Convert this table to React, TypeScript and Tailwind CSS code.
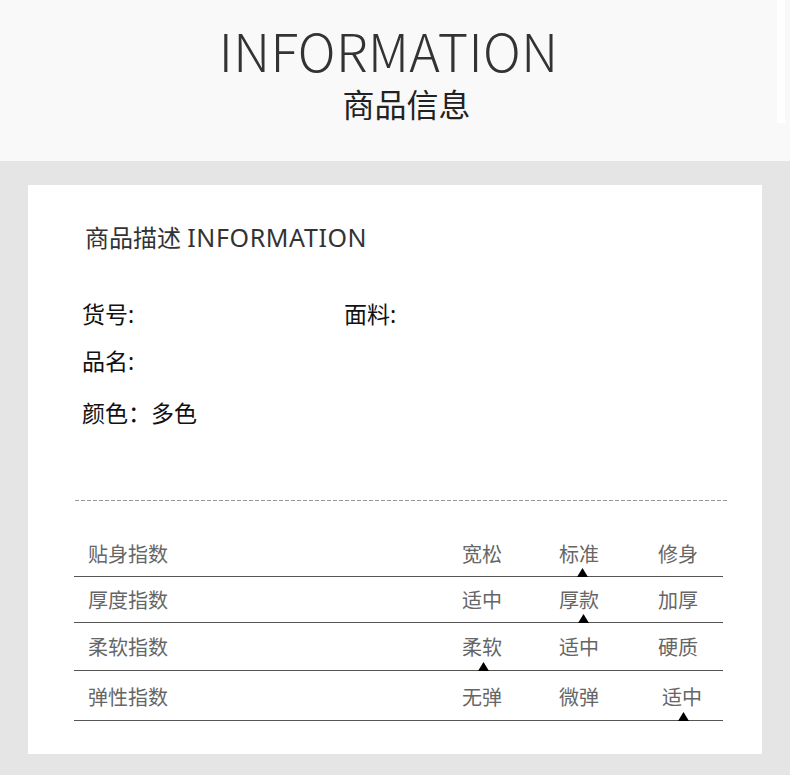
import React from 'react';

const rows = [
  { label: '贴身指数', values: ['宽松', '标准', '修身'], h: 'h-[47px] pb-[11px]', mark: 'left-[503px]', shift: '' },
  { label: '厚度指数', values: ['适中', '厚款', '加厚'], h: 'h-[46px] pb-[11px]', mark: 'left-[504px]', shift: '' },
  { label: '柔软指数', values: ['柔软', '适中', '硬质'], h: 'h-[48px] pb-[12px]', mark: 'left-[404px]', shift: '' },
  { label: '弹性指数', values: ['无弹', '微弹', '适中'], h: 'h-[50px] pb-[12px]', mark: 'left-[604px]', shift: 'pl-[4px]' },
];

function Marker({ className }: { className: string }) {
  return (
    <svg className={`absolute bottom-[-1px] ${className}`} width="11" height="9" viewBox="0 0 11 9">
      <polygon points="5.5,0 11,9 0,9" fill="#000" />
    </svg>
  );
}

export default function App() {
  const cjk = 'font-["Noto_Sans","Noto_Sans_CJK_SC",sans-serif]';
  return (
    <main className={`w-[790px] h-[775px] bg-[#e5e5e5] overflow-hidden ${cjk}`}>
      {/* Header band */}
      <header className="h-[161px] bg-[#f9f9f9] flex items-start pr-[5px]">
        <div className="flex-1 flex flex-col items-center">
          <h1 className='mt-[28px] font-["Noto_Sans_CJK_SC",sans-serif] font-light text-[52px] leading-[44px] tracking-[0.4px] text-[#333]'>
            INFORMATION
          </h1>
          <p className='mt-[15px] pl-[36px] font-["Noto_Sans_CJK_SC",sans-serif] text-[32px] leading-[32px] text-[#222]'>
            商品信息
          </p>
        </div>
        <div className="w-[8px] h-[123px] bg-white" />
      </header>

      {/* Card */}
      <section className="mx-[28px] mt-[24px] h-[569px] bg-white flex flex-col pt-[36px]">
        <h2 className="pl-[57px] text-[24px] leading-[32px] text-[#333]">
          商品描述 <span className="text-[25px] tracking-[0.6px]">INFORMATION</span>
        </h2>

        <div className="pl-[54px] mt-[44px] text-[23px] leading-[32px] text-[#111]">
          <div className="flex">
            <span className="w-[262px]">货号:</span>
            <span>面料:</span>
          </div>
          <div className="mt-[15px]">品名:</div>
          <div className="mt-[20px]">颜色：多色</div>
        </div>

        <div className="ml-[47px] mr-[35px] mt-[71px] h-px bg-[repeating-linear-gradient(to_right,#999_0,#999_4px,transparent_4px,transparent_6px)]" />

        <div className="ml-[46px] mr-[39px] mt-[29px] text-[20px] leading-[20px] text-[#666]">
          {rows.map((r) => (
            <div
              key={r.label}
              className={`relative grid grid-cols-[374px_97px_99px_1fr] items-end pl-[14px] border-b border-[#555] ${r.h}`}
            >
              <span>{r.label}</span>
              <span>{r.values[0]}</span>
              <span>{r.values[1]}</span>
              <span className={r.shift}>{r.values[2]}</span>
              <Marker className={r.mark} />
            </div>
          ))}
        </div>
      </section>
    </main>
  );
}
